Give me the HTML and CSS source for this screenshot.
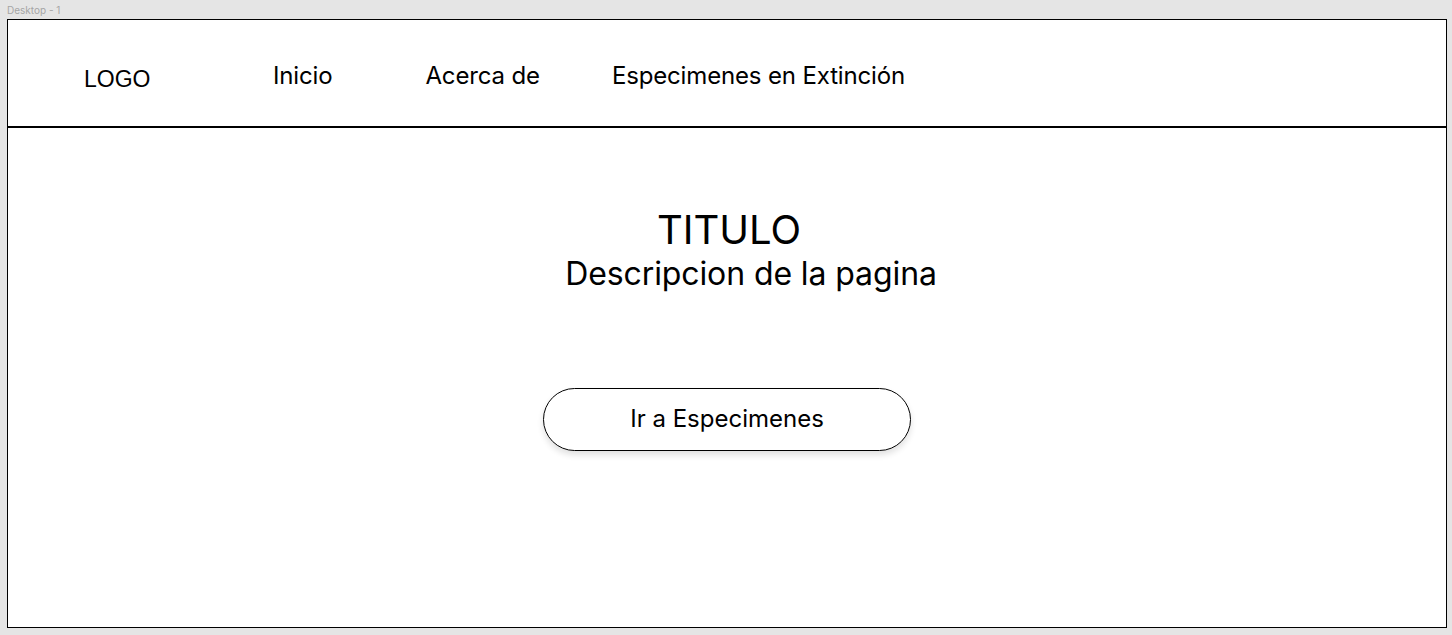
FILE: index.html
```html
<!DOCTYPE html>
<html lang="es">
<head>
<meta charset="utf-8">
<title>Desktop - 1</title>
<link rel="stylesheet" href="styles.css">
</head>
<body>
  <div class="canvas-label">Desktop - 1</div>
  <div class="frame">
    <header class="header">
      <div class="logo">LOGO</div>
      <nav class="nav">
        <a class="nav-link nav-inicio" href="#">Inicio</a>
        <a class="nav-link nav-acerca" href="#">Acerca de</a>
        <a class="nav-link nav-especimenes" href="#">Especimenes en Extinción</a>
      </nav>
    </header>
    <main class="hero">
      <h1 class="hero-title">TITULO</h1>
      <p class="hero-desc">Descripcion de la pagina</p>
      <button class="hero-btn" type="button">Ir a Especimenes</button>
    </main>
  </div>
</body>
</html>
```
FILE: styles.css
```css
* {
  box-sizing: border-box;
}

html, body {
  margin: 0;
  padding: 0;
}

body {
  background: #e5e5e5;
  font-family: Inter, "Noto Sans", sans-serif;
  color: #000;
  width: 1452px;
  height: 635px;
  overflow: hidden;
}

.canvas-label {
  font-family: Inter, "Noto Sans", sans-serif;
  font-size: 10px;
  line-height: 12px;
  color: #a6a6a6;
  padding: 4px 0 0 7px;
  height: 19px;
}

.frame {
  margin-left: 7px;
  width: 1440px;
  height: 609px;
  background: #fff;
  border: 1px solid #000;
  display: flex;
  flex-direction: column;
}

.header {
  height: 108px;
  border-bottom: 2px solid #000;
  display: flex;
  align-items: flex-start;
  padding: 41px 0 0 76px;
}

.logo {
  font-family: "Liberation Sans", Arial, sans-serif;
  font-size: 23px;
  line-height: 26px;
  margin-top: 5px;
  width: 65px;
}

.nav {
  display: flex;
  align-items: flex-start;
}

.nav-link {
  font-size: 24px;
  line-height: 29px;
  letter-spacing: -0.15px;
  color: #000;
  text-decoration: none;
}

.nav-inicio {
  margin-left: 124px;
}

.nav-acerca {
  margin-left: 93px;
}

.nav-especimenes {
  margin-left: 72px;
}

.hero {
  display: flex;
  flex-direction: column;
  align-items: center;
  padding-top: 78px;
}

.hero-title {
  margin: 0;
  padding-left: 4px;
  font-size: 40px;
  line-height: 48px;
  font-weight: 400;
}

.hero-desc {
  margin: 0;
  padding-left: 48px;
  font-size: 32px;
  line-height: 39px;
  letter-spacing: -0.1px;
  font-weight: 400;
}

.hero-btn {
  margin-top: 95px;
  width: 368px;
  height: 63px;
  padding: 0 0 2px;
  border: 1px solid #000;
  border-radius: 31.5px;
  background: #fff;
  font-family: Inter, "Noto Sans", sans-serif;
  font-size: 24px;
  line-height: 29px;
  color: #000;
  box-shadow: 0 4px 6px rgba(0, 0, 0, 0.12);
  cursor: pointer;
}
```
